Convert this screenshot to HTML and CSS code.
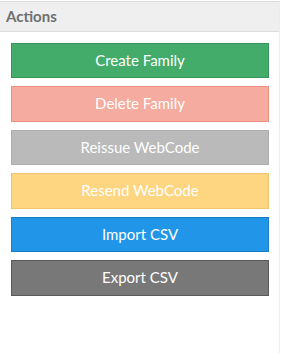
FILE: index.html
```html
<!DOCTYPE html>
<html>
<head>
  <link rel="stylesheet" href="styles.css">
</head>
<body>
<div class="panel">
  <div class="panel-heading">Actions</div>
  <div class="panel-body">
    <button class="btn btn-create">Create Family</button>
    <button class="btn btn-delete">Delete Family</button>
    <button class="btn btn-reissue">Reissue WebCode</button>
    <button class="btn btn-resend">Resend WebCode</button>
    <button class="btn btn-import">Import CSV</button>
    <button class="btn btn-export">Export CSV</button>
  </div>
</div>
</body>
</html>
```
FILE: styles.css
```css
html, body {
  margin: 0;
  padding: 0;
  background: #fff;
  font-family: Lato, "Open Sans", sans-serif;
}

.panel {
  margin-top: 1px;
  width: 280px;
  height: 352px;
  border-top: 1px solid #dcdcdc;
  border-right: 1px solid #ececec;
  box-sizing: border-box;
}

.panel-heading {
  background: #efefef;
  color: #6f6f6f;
  font-weight: bold;
  font-size: 15px;
  height: 29px;
  line-height: 29px;
  padding-left: 6px;
  border-bottom: 1px solid #dcdcdc;
}

.panel-body {
  padding: 11px 10px 0 11px;
  display: flex;
  flex-direction: column;
  gap: 8px;
}

.btn {
  display: block;
  width: 258px;
  border: 1px solid;
  font-family: Lato, "Open Sans", sans-serif;
  font-size: 15px;
  line-height: 1.42857;
  padding: 6px 12px;
  color: #fff;
  text-align: center;
  margin: 0;
}

.btn-create {
  background: #43ac6a;
  border-color: #3a935b;
}

.btn-delete {
  background: #f5aba0;
  border-color: #ee8f82;
}

.btn-reissue {
  background: #bababa;
  border-color: #adadad;
}

.btn-resend {
  background: #fed580;
  border-color: #f1c56c;
}

.btn-import {
  background: #2196e8;
  border-color: #1a7cc6;
}

.btn-export {
  background: #787878;
  border-color: #5a5a5a;
}
```
